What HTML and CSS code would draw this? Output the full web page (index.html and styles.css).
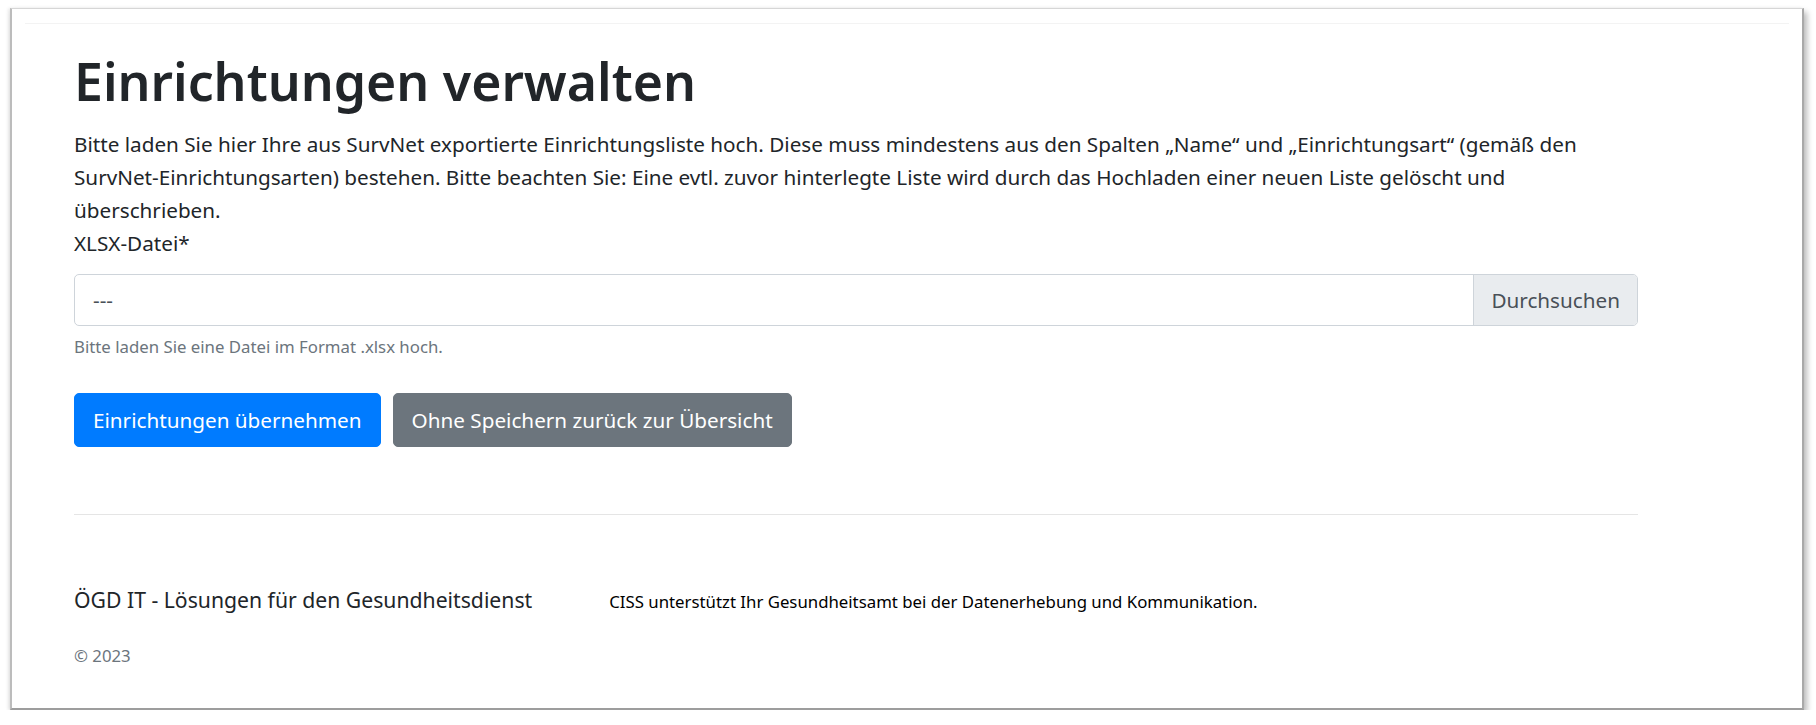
FILE: index.html
```html
<!DOCTYPE html>
<html lang="de">
<head>
<meta charset="utf-8">
<title>Einrichtungen verwalten</title>
<link rel="stylesheet" href="styles.css">
</head>
<body>
<div class="frame">
  <div class="topbar"></div>
  <main class="content">
    <h1 class="title">Einrichtungen verwalten</h1>
    <p class="intro">Bitte laden Sie hier Ihre aus SurvNet exportierte Einrichtungsliste hoch. Diese muss mindestens aus den Spalten „Name“ und „Einrichtungsart“ (gemäß den SurvNet-Einrichtungsarten) bestehen. Bitte beachten Sie: Eine evtl. zuvor hinterlegte Liste wird durch das Hochladen einer neuen Liste gelöscht und überschrieben.</p>
    <label class="field-label">XLSX-Datei*</label>
    <div class="file-input">
      <span class="file-name">---</span>
      <span class="file-browse">Durchsuchen</span>
    </div>
    <small class="help">Bitte laden Sie eine Datei im Format .xlsx hoch.</small>
    <div class="actions">
      <button class="btn btn-primary">Einrichtungen übernehmen</button>
      <button class="btn btn-secondary">Ohne Speichern zurück zur Übersicht</button>
    </div>
    <hr class="divider">
    <footer class="footer">
      <div class="footer-row">
        <span class="footer-brand">ÖGD IT - Lösungen für den Gesundheitsdienst</span>
        <span class="footer-claim">CISS unterstützt Ihr Gesundheitsamt bei der Datenerhebung und Kommunikation.</span>
      </div>
      <div class="copyright">© 2023</div>
    </footer>
  </main>
</div>
</body>
</html>
```
FILE: styles.css
```css
html, body {
  margin: 0;
  padding: 0;
  background: #ffffff;
}

body {
  font-family: "Noto Sans", "Open Sans", sans-serif;
  color: #212529;
  overflow: hidden;
}

.frame {
  box-sizing: border-box;
  margin: 8px 0 0 10px;
  width: 1794px;
  height: 702px;
  background: #ffffff;
  border: 1px solid #d6d6d6;
  border-left: 2px solid #bcbcbc;
  border-right: 2px solid #a9a9a9;
  border-bottom: 2px solid #9d9d9d;
  box-shadow: 3px 4px 6px rgba(0, 0, 0, 0.28), -2px 0 3px rgba(0, 0, 0, 0.08);
}

.topbar {
  height: 14px;
  margin: 0 13px 0 13px;
  border-bottom: 1px solid #f3f3f3;
}

.content {
  padding-left: 62px;
  width: 1564px;
}

.title {
  margin: 26px 0 15px;
  font-size: 51.75px;
  line-height: 62.5px;
  font-weight: 600;
  color: #212529;
}

.intro {
  margin: 0;
  font-size: 20.7px;
  line-height: 33px;
}

.field-label {
  display: block;
  font-size: 20.7px;
  line-height: 33px;
}

.file-input {
  box-sizing: border-box;
  margin-top: 14.5px;
  height: 52px;
  display: flex;
  align-items: stretch;
  border: 1px solid #ced4da;
  border-radius: 5px;
  overflow: hidden;
  font-size: 20.7px;
  color: #495057;
}

.file-name {
  flex: 1;
  display: flex;
  align-items: center;
  padding-left: 18px;
}

.file-browse {
  display: flex;
  align-items: center;
  padding: 0 17px 0 17px;
  background: #e9ecef;
  border-left: 1px solid #ced4da;
}

.help {
  display: block;
  margin-top: 8px;
  font-size: 16.8px;
  line-height: 25px;
  color: #6c757d;
}

.actions {
  margin-top: 34px;
  display: flex;
  gap: 12px;
}

.btn {
  box-sizing: border-box;
  height: 54px;
  padding: 0 18px;
  border: 1px solid transparent;
  border-radius: 5px;
  font-family: inherit;
  font-size: 20.7px;
  color: #ffffff;
  cursor: pointer;
}

.btn-primary {
  background: #007bff;
  border-color: #007bff;
}

.btn-secondary {
  background: #6c757d;
  border-color: #6c757d;
}

.divider {
  margin: 67px 0 0;
  border: 0;
  border-top: 1px solid #e5e5e5;
  height: 0;
}

.footer {
  padding-top: 70px;
}

.footer-row {
  display: flex;
  align-items: baseline;
  gap: 77px;
  line-height: 30px;
}

.footer-brand {
  font-size: 21.2px;
  color: #212529;
}

.footer-claim {
  font-size: 16.8px;
  color: #000000;
}

.copyright {
  margin-top: 26px;
  font-size: 16.8px;
  line-height: 25px;
  color: #6c757d;
}
```
